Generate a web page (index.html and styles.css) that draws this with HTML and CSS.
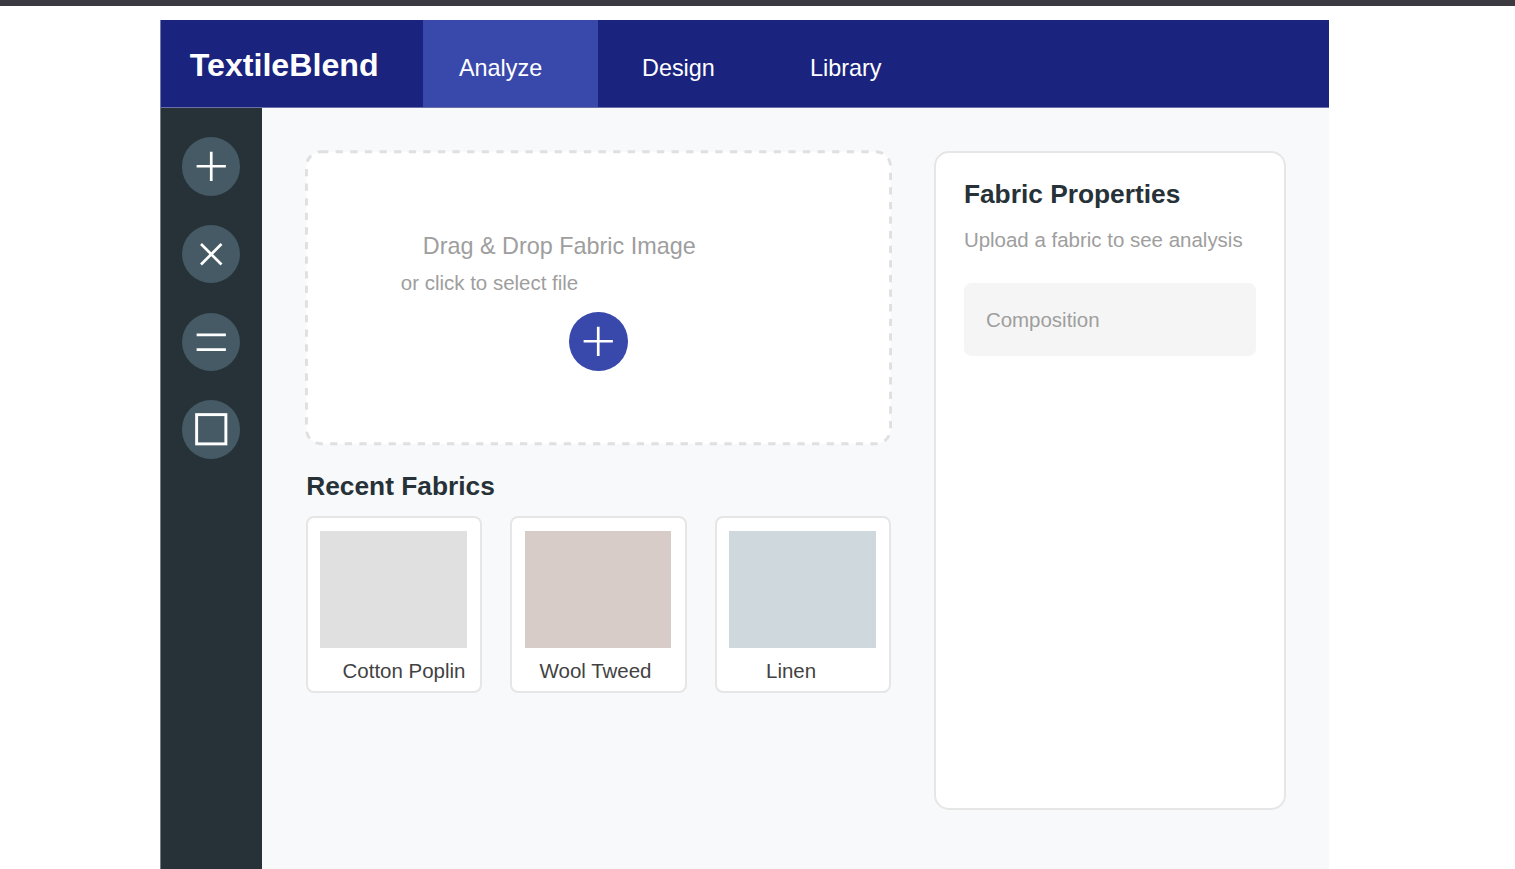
FILE: index.html
```html
<!DOCTYPE html>
<html>
    <head>
        <title>TextileBlend</title>
        <link rel="stylesheet" href="styles.css">
    </head>
    <body>
        <div class="topstrip"></div>
        <div class="app">
            <header class="header">
                <div class="logo">TextileBlend</div>
                <nav class="nav">
                    <a class="nav-item nav-analyze">Analyze</a>
                    <a class="nav-item nav-design">Design</a>
                    <a class="nav-item nav-library">Library</a>
                </nav>
            </header>
            <div class="body-row">
                <aside class="sidebar">
                    <button class="tool">
                        <svg viewBox="0 0 40 40"><path d="M20 10V30M10 20H30"/></svg>
                    </button>
                    <button class="tool">
                        <svg viewBox="0 0 40 40"><path d="M13 13L27 27M27 13L13 27"/></svg>
                    </button>
                    <button class="tool">
                        <svg viewBox="0 0 40 40"><path d="M10 15H30M10 25H30"/></svg>
                    </button>
                    <button class="tool">
                        <svg viewBox="0 0 40 40"><rect x="10" y="10" width="20" height="20"/></svg>
                    </button>
                </aside>
                <main class="content">
                    <section class="left-col">
                        <div class="dropzone">
                            <svg class="drop-border" viewBox="0 0 402 202"><rect x="1" y="1" width="400" height="200" rx="10"/></svg>
                            <div class="drop-title">Drag &amp; Drop Fabric Image</div>
                            <div class="drop-sub">or click to select file</div>
                            <button class="drop-btn">
                                <svg viewBox="0 0 40 40"><path d="M20 10V30M10 20H30"/></svg>
                            </button>
                        </div>
                        <h2 class="recent-title">Recent Fabrics</h2>
                        <div class="fabric-list">
                            <div class="fabric-card">
                                <div class="swatch swatch-cotton"></div>
                                <div class="fabric-name name-cotton">Cotton Poplin</div>
                            </div>
                            <div class="fabric-card">
                                <div class="swatch swatch-wool"></div>
                                <div class="fabric-name name-wool">Wool Tweed</div>
                            </div>
                            <div class="fabric-card">
                                <div class="swatch swatch-linen"></div>
                                <div class="fabric-name name-linen">Linen</div>
                            </div>
                        </div>
                    </section>
                    <section class="props">
                        <h2 class="props-title">Fabric Properties</h2>
                        <p class="props-sub">Upload a fabric to see analysis</p>
                        <div class="props-box">Composition</div>
                    </section>
                </main>
            </div>
        </div>
    </body>
</html>
```

FILE: styles.css
```css
html, body {
    margin: 0;
    height: 100%;
    overflow: hidden;
}
body {
    background: #fff;
    font-family: "Liberation Sans", Arial, sans-serif;
}
.topstrip {
    height: 6px;
    background: #3a3a40;
}
.app {
    width: 1169px;
    margin: 14px 0 0 160px;
}
.header {
    display: flex;
    height: 87px;
    background: #1a237e;
    border-bottom: 1px solid #6a6fa8;
    box-shadow: inset 1px 0 0 #7076ae;
    color: #fff;
}
.logo {
    width: 233.25px;
    padding: 27px 0 0 29.75px;
    font-size: 32.175px;
    font-weight: bold;
    line-height: 37px;
}
.nav {
    display: flex;
}
.nav-item {
    height: 87px;
    box-sizing: border-box;
    padding-top: 34px;
    font-size: 23.4px;
    line-height: 28px;
}
.nav-analyze {
    width: 175px;
    padding-left: 36px;
    background: #3949ab;
}
.nav-design {
    width: 168px;
    padding-left: 44px;
}
.nav-library {
    width: 120px;
    padding-left: 44px;
}
.body-row {
    display: flex;
    height: 762px;
}
.sidebar {
    width: 102.4px;
    background: #263238;
    box-shadow: inset 1px 0 0 #767d80;
    display: flex;
    flex-direction: column;
    align-items: center;
    gap: 29.25px;
    padding-top: 29px;
    box-sizing: border-box;
}
.tool, .drop-btn {
    width: 58.5px;
    height: 58.5px;
    border: 0;
    border-radius: 50%;
    padding: 0;
    display: flex;
    flex: none;
}
.tool {
    background: #455a64;
}
.tool svg, .drop-btn svg {
    width: 100%;
    height: 100%;
    fill: none;
    stroke: #fff;
    stroke-width: 1.85;
}
.tool svg rect {
    stroke-width: 2;
}
.content {
    flex: 1;
    background: #f8f9fa;
    display: flex;
    gap: 42.5px;
    padding: 42.2px 0 0 42.4px;
    box-sizing: border-box;
    align-items: flex-start;
}
.left-col {
    width: 587px;
}
.dropzone {
    position: relative;
    height: 295.4px;
    box-sizing: border-box;
    display: flex;
    flex-direction: column;
    align-items: flex-start;
    padding-top: 81.8px;
}
.drop-border {
    position: absolute;
    top: 0;
    left: 0;
    width: 100%;
    height: 100%;
}
.drop-border rect {
    fill: #fff;
    stroke: #e0e0e0;
    stroke-width: 2;
    stroke-dasharray: 5 5;
}
.drop-title, .drop-sub, .drop-btn {
    position: relative;
}
.drop-title {
    margin-left: 118px;
    font-size: 23.4px;
    line-height: 28px;
    color: #9e9e9e;
}
.drop-sub {
    margin: 11px 0 0 96px;
    font-size: 20.475px;
    line-height: 23px;
    color: #9e9e9e;
}
.drop-btn {
    align-self: center;
    margin-top: 18.25px;
    background: #3949ab;
}
.recent-title {
    margin: 25.4px 0 0 1.4px;
    font-size: 26.325px;
    line-height: 30px;
    color: #263238;
}
.fabric-list {
    display: flex;
    gap: 28.2px;
    margin: 15.5px 0 0 1px;
}
.fabric-card {
    width: 176.4px;
    height: 176.5px;
    box-sizing: border-box;
    background: #fff;
    border: 2px solid #e6e6e6;
    border-radius: 8px;
    padding: 12.9px 12.5px;
}
.swatch {
    width: 146.25px;
    height: 117px;
}
.swatch-cotton { background: #e0e0e0; }
.swatch-wool { background: #d7ccc8; }
.swatch-linen { background: #cfd8dc; }
.fabric-name {
    margin-top: 11px;
    font-size: 20.475px;
    line-height: 23px;
    white-space: nowrap;
    color: #424242;
}
.name-cotton { margin-left: 22.3px; }
.name-wool { margin-left: 14.7px; }
.name-linen { margin-left: 36.6px; }
.props {
    width: 351.8px;
    height: 659.4px;
    margin-top: 0.7px;
    box-sizing: border-box;
    background: #fff;
    border: 2px solid #e6e6e6;
    border-radius: 15px;
    padding: 26.1px 28.4px 0 27.6px;
}
.props-title {
    margin: 0;
    font-size: 26.325px;
    line-height: 30px;
    color: #263238;
}
.props-sub {
    margin: 19px 0 0;
    font-size: 20.475px;
    line-height: 23px;
    color: #9e9e9e;
}
.props-box {
    margin-top: 32.25px;
    height: 73.1px;
    box-sizing: border-box;
    padding: 25px 22px 0;
    background: #f5f5f5;
    border-radius: 7.3px;
    font-size: 20.475px;
    line-height: 23px;
    color: #9e9e9e;
}
```
